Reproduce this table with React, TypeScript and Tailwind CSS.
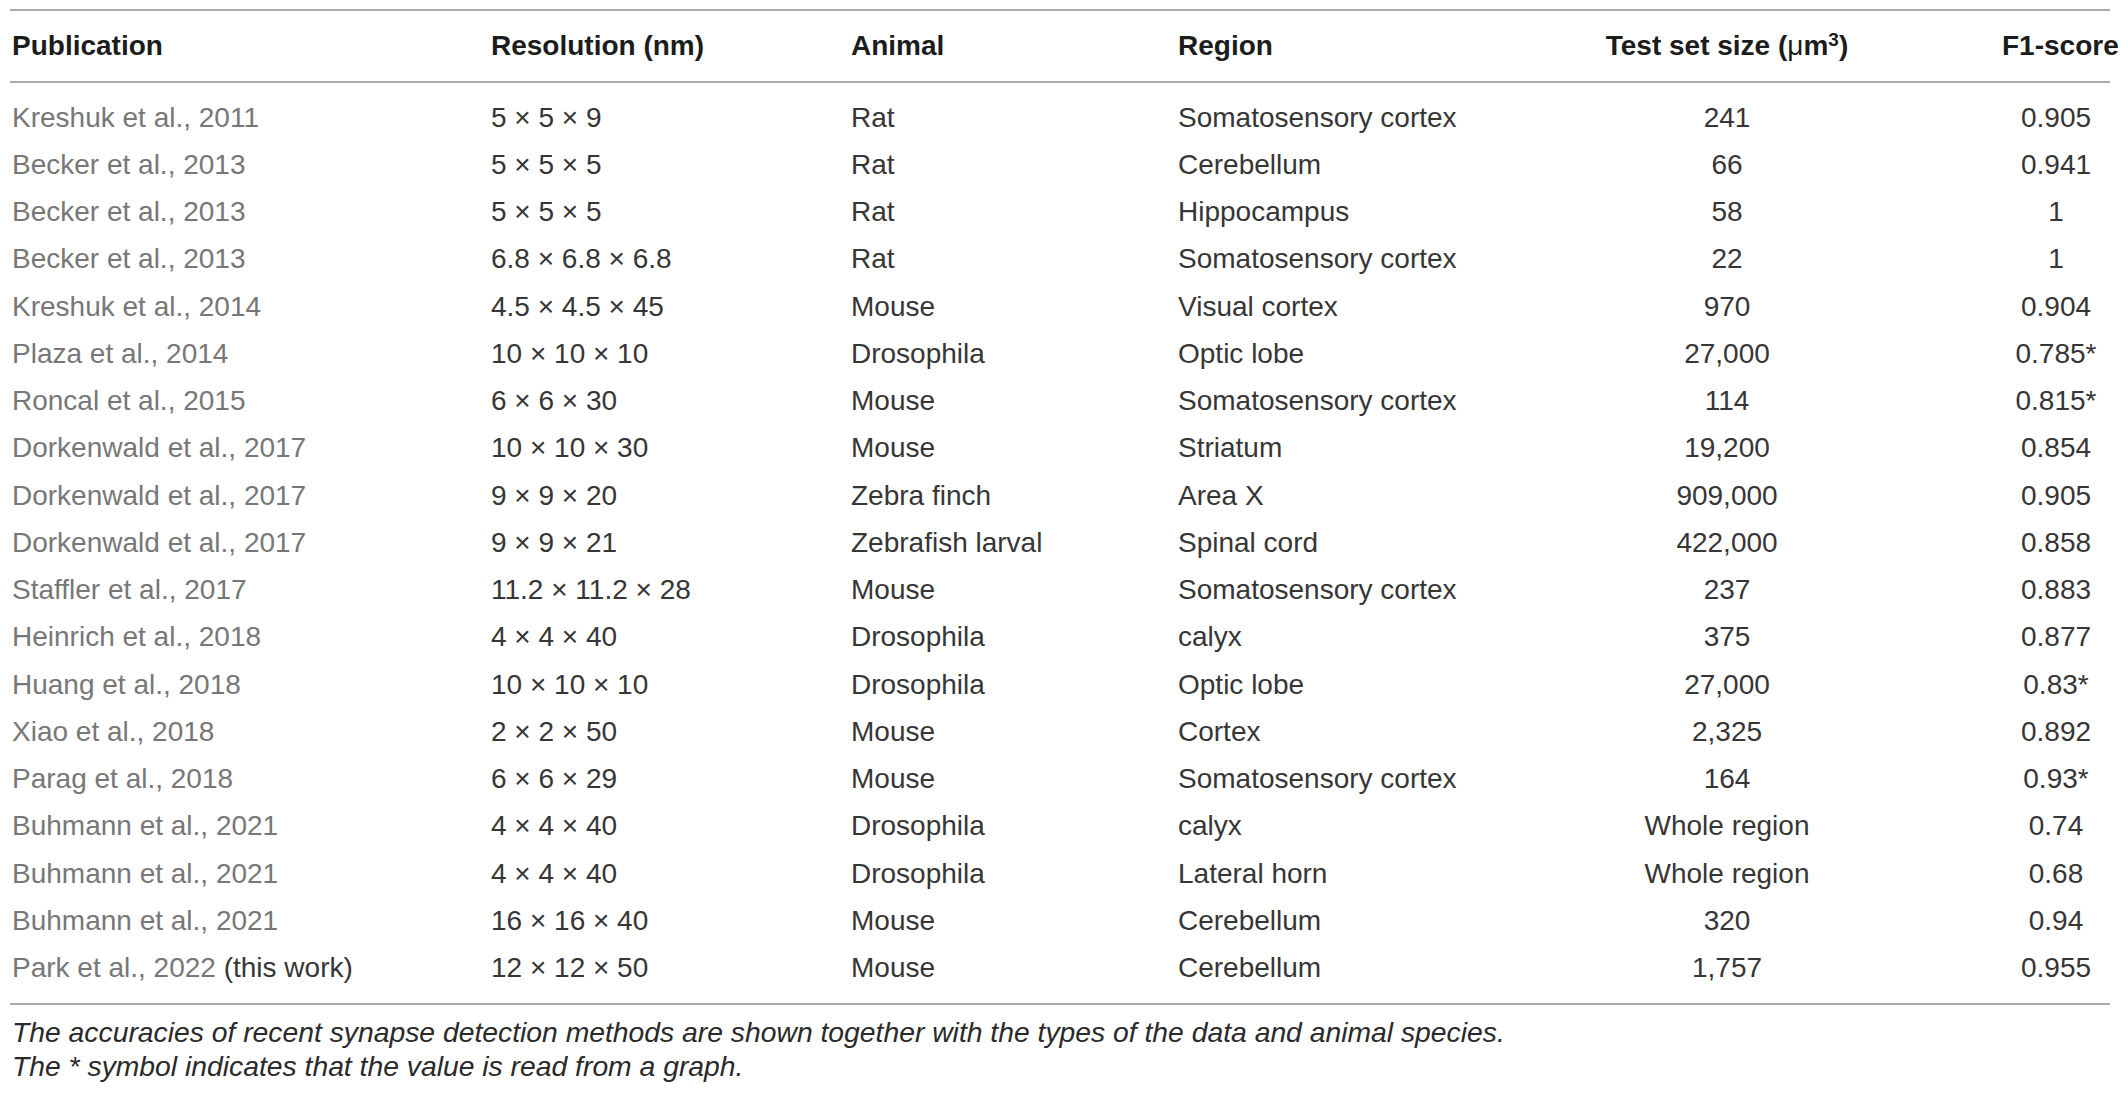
const rows: [string, string, string, string, string, string][] = [
  ["Kreshuk et al., 2011", "5 × 5 × 9", "Rat", "Somatosensory cortex", "241", "0.905"],
  ["Becker et al., 2013", "5 × 5 × 5", "Rat", "Cerebellum", "66", "0.941"],
  ["Becker et al., 2013", "5 × 5 × 5", "Rat", "Hippocampus", "58", "1"],
  ["Becker et al., 2013", "6.8 × 6.8 × 6.8", "Rat", "Somatosensory cortex", "22", "1"],
  ["Kreshuk et al., 2014", "4.5 × 4.5 × 45", "Mouse", "Visual cortex", "970", "0.904"],
  ["Plaza et al., 2014", "10 × 10 × 10", "Drosophila", "Optic lobe", "27,000", "0.785*"],
  ["Roncal et al., 2015", "6 × 6 × 30", "Mouse", "Somatosensory cortex", "114", "0.815*"],
  ["Dorkenwald et al., 2017", "10 × 10 × 30", "Mouse", "Striatum", "19,200", "0.854"],
  ["Dorkenwald et al., 2017", "9 × 9 × 20", "Zebra finch", "Area X", "909,000", "0.905"],
  ["Dorkenwald et al., 2017", "9 × 9 × 21", "Zebrafish larval", "Spinal cord", "422,000", "0.858"],
  ["Staffler et al., 2017", "11.2 × 11.2 × 28", "Mouse", "Somatosensory cortex", "237", "0.883"],
  ["Heinrich et al., 2018", "4 × 4 × 40", "Drosophila", "calyx", "375", "0.877"],
  ["Huang et al., 2018", "10 × 10 × 10", "Drosophila", "Optic lobe", "27,000", "0.83*"],
  ["Xiao et al., 2018", "2 × 2 × 50", "Mouse", "Cortex", "2,325", "0.892"],
  ["Parag et al., 2018", "6 × 6 × 29", "Mouse", "Somatosensory cortex", "164", "0.93*"],
  ["Buhmann et al., 2021", "4 × 4 × 40", "Drosophila", "calyx", "Whole region", "0.74"],
  ["Buhmann et al., 2021", "4 × 4 × 40", "Drosophila", "Lateral horn", "Whole region", "0.68"],
  ["Buhmann et al., 2021", "16 × 16 × 40", "Mouse", "Cerebellum", "320", "0.94"],
  ["Park et al., 2022", "12 × 12 × 50", "Mouse", "Cerebellum", "1,757", "0.955"],
];

const cols = "grid grid-cols-[479px_360px_327px_276px_550px_108px]";

export default function App() {
  return (
    <div className="bg-white w-[2128px] h-[1096px] pt-[9px] px-[10px] font-['Liberation_Sans',Arial,sans-serif] text-[28px] text-[#363636]">
      <div className="w-[2100px]">
        <div className="h-[2px] bg-[#ababab]" />

        {/* header */}
        <div className={`${cols} h-[70px] items-center font-bold text-[#1c1c1c] whitespace-nowrap`}>
          <div className="pl-[2px]">Publication</div>
          <div className="pl-[2px]">Resolution (nm)</div>
          <div className="pl-[2px]">Animal</div>
          <div className="pl-[2px]">Region</div>
          <div className="text-center">
            Test set size (<span className="font-normal">μ</span>m<sup className="text-[19px] top-[-0.45em]">3</sup>)
          </div>
          <div className="text-center">F1-score</div>
        </div>

        <div className="h-[2px] bg-[#ababab]" />

        {/* body */}
        <div className="py-[11px]">
          {rows.map((r, i) => (
            <div key={i} className={`${cols} h-[47.25px] items-center whitespace-nowrap`}>
              <div className="pl-[2px] text-[#777]">
                {r[0]}
                {i === rows.length - 1 && <span className="text-[#363636]"> (this work)</span>}
              </div>
              <div className="pl-[2px]">{r[1]}</div>
              <div className="pl-[2px]">{r[2]}</div>
              <div className="pl-[2px]">{r[3]}</div>
              <div className="text-center">{r[4]}</div>
              <div className="text-center">{r[5]}</div>
            </div>
          ))}
        </div>

        <div className="h-[2px] bg-[#ababab]" />

        {/* caption */}
        <div className="pt-[10px] pl-[2px] italic text-[28.3px] leading-[34px] text-[#2a2a2a]">
          <p>The accuracies of recent synapse detection methods are shown together with the types of the data and animal species.</p>
          <p>The * symbol indicates that the value is read from a graph.</p>
        </div>
      </div>
    </div>
  );
}
